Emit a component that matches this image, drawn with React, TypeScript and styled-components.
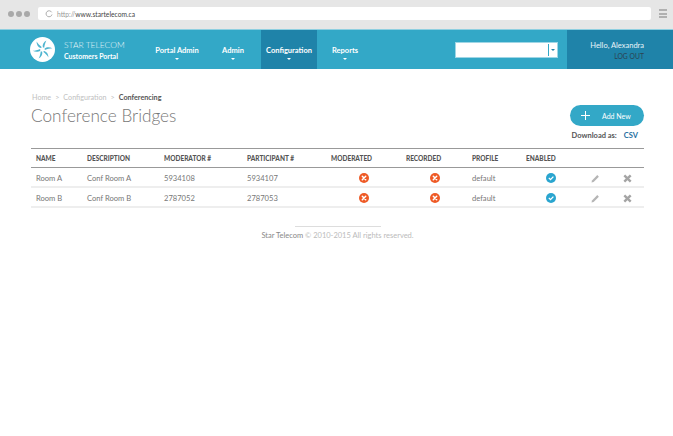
import React from "react";
import styled, { createGlobalStyle } from "styled-components";

const Global = createGlobalStyle`
  html, body { margin: 0; padding: 0; background: #fff; }
  body { width: 673px; height: 436px; overflow: hidden; font-family: Lato, "Open Sans", sans-serif; color: #555; }
  * { box-sizing: border-box; }
`;

const BrowserBar = styled.div`
  height: 29px; background: #e6e6e6; display: flex; align-items: center; padding: 0 6px 2px 8px;
`;
const Dots = styled.div`display: flex; gap: 2px; width: 30px;`;
const Dot = styled.span`width: 6px; height: 6px; border-radius: 50%; background: #a9a9a9;`;
const UrlBar = styled.div`
  width: 613px; height: 13px; background: #fff; border-radius: 2px; display: flex; align-items: center;
  padding-left: 7px; font-size: 6.7px; color: #999; gap: 4px;
`;
const UrlHost = styled.span`color: #444;`;
const Burger = styled.div`
  margin-left: 8px; width: 8px; height: 9px; display: flex; flex-direction: column; justify-content: space-between;
  & > i { display: block; height: 2px; background: #b0b0b0; }
`;

const Nav = styled.header`
  height: 40px; background: #33a8c7; border-top: 1px solid #8fcfe0; display: flex; color: #fff;
`;
const Brand = styled.div`width: 149px; padding-left: 30px; display: flex; align-items: center; gap: 9px;`;
const BrandText = styled.div`display: flex; flex-direction: column;`;
const BrandName = styled.span`font-size: 8.5px; font-weight: 300; line-height: 12px; color: #e4f4f8; white-space: nowrap;`;
const BrandSub = styled.span`font-size: 7px; font-weight: 700; line-height: 10px; white-space: nowrap;`;
const Menu = styled.nav`display: flex; height: 100%;`;
const MenuItem = styled.div<{ $active?: boolean }>`
  width: 56px; background: ${p => (p.$active ? "#1f83a9" : "transparent")};
  display: flex; flex-direction: column; align-items: center; padding-top: 16px;
  font-size: 7.5px; font-weight: 700; line-height: 10px; white-space: nowrap;
  &::after { content: ""; margin-top: 2px; border: 2.5px solid transparent; border-top: 2.5px solid #fff; border-bottom: 0; }
`;
const Spacer = styled.div`flex: 1;`;
const Picker = styled.div`
  width: 103px; height: 16px; margin: 12px 9px 0 0; background: #fff; border: 1px solid #9fd6e5; display: flex; justify-content: flex-end; align-items: center; padding-right: 1px;
`;
const PickerBtn = styled.div`
  width: 8px; height: 12px; border-left: 1px solid #33a8c7; display: flex; align-items: center; justify-content: center;
  &::after { content: ""; border: 2.5px solid transparent; border-top: 2.5px solid #1f83a9; border-bottom: 0; }
`;
const User = styled.div`
  width: 106px; background: #1f83a9; display: flex; flex-direction: column; align-items: flex-end; padding: 10px 29px 0 0;
`;
const Hello = styled.span`font-size: 7.5px; line-height: 11px; color: #e8f5f9; white-space: nowrap;`;
const LogOut = styled.span`font-size: 6.8px; line-height: 10px; color: #2b4452; white-space: nowrap;`;

const Main = styled.main`padding: 24px 29px 0 31px;`;
const Crumbs = styled.div`font-size: 7.2px; line-height: 10px; color: #c0c0c0; display: flex; gap: 4px; padding-left: 1px;`;
const Current = styled.span`color: #555; font-weight: 700;`;
const TitleRow = styled.div`display: flex; justify-content: space-between; align-items: flex-start; height: 45px;`;
const Title = styled.h1`margin: 1px 0 0; font-size: 17.2px; line-height: 24px; font-weight: 300; color: #777;`;
const Actions = styled.div`display: flex; flex-direction: column; align-items: flex-end; margin-top: 2px;`;
const AddButton = styled.button`
  width: 74px; height: 21px; border: 0; border-radius: 11px; background: #33a8c7; color: #fff; padding: 0 0 0 11px;
  font: 400 7px Lato, sans-serif; display: flex; align-items: center; gap: 12px;
`;
const Download = styled.div`margin-top: 5px; display: flex; gap: 7px; padding-right: 6px; font-size: 7.5px; font-weight: 700; line-height: 10px; color: #555;`;
const Csv = styled.span`color: #1f6f9f;`;

const Table = styled.table`
  width: 613px; border-collapse: separate; border-spacing: 0; table-layout: fixed; border-top: 1px solid #999;
`;
const Th = styled.th`
  height: 19px; padding: 1px 0 0 5px; text-align: left; font-size: 6.5px; font-weight: 900; color: #555;
  border-bottom: 1px solid #999; white-space: nowrap;
`;
const Td = styled.td`
  height: 20px; padding: 2px 0 0 5px; font-size: 7.6px; color: #777; border-bottom: 2px solid #eee; white-space: nowrap;
`;
const IconTd = styled(Td)<{ $pad: number }>`
  padding: 2px 0 0 ${p => p.$pad}px; & > svg { display: block; }
`;

const Footer = styled.footer`
  margin: 18px 0 0 0; display: flex; flex-direction: column; align-items: center; font-size: 7.5px; line-height: 10px; color: #bbb;
`;
const FooterRule = styled.div`width: 86px; height: 1px; background: #ddd; margin-bottom: 4px;`;
const FooterName = styled.span`color: #888;`;

const Logo = () => (
  <svg width="25" height="25" viewBox="0 0 25 25">
    <circle cx="12.5" cy="12.5" r="12.5" fill="#fff" />
    {[0, 60, 120, 180, 240, 300].map(a => (
      <path key={a} d="M12.8 10.2 C12.2 7.6 13.6 5 16.4 3.4 C15.2 5.6 14.6 8 14.2 10.8 Z" fill="#4fb5d0" transform={`rotate(${a} 12.5 12.5)`} />
    ))}
  </svg>
);
const Reload = () => (
  <svg width="8" height="8" viewBox="0 0 8 8" fill="none" stroke="#999" strokeWidth=".8"><path d="M6.7 2.3A3 3 0 1 0 7 4.5" /></svg>
);
const Plus = () => (
  <svg width="9" height="9" viewBox="0 0 9 9" stroke="#fff" strokeWidth="1"><path d="M4.5 0v9M0 4.5h9" /></svg>
);
const Cross = () => (
  <svg width="10" height="10" viewBox="0 0 10 10"><circle cx="5" cy="5" r="5" fill="#ee5a26" /><path d="M3.3 3.3l3.4 3.4M6.7 3.3l-3.4 3.4" stroke="#fff" strokeWidth="1.5" strokeLinecap="round" /></svg>
);
const Check = () => (
  <svg width="10" height="10" viewBox="0 0 10 10"><circle cx="5" cy="5" r="5" fill="#2aa5cf" /><path d="M2.8 4.9l1.7 1.7 2.9-3" stroke="#fff" strokeWidth="1.3" fill="none" /></svg>
);
const Pencil = () => (
  <svg width="9" height="9" viewBox="0 0 9 9"><path d="M0.5 8.5 L1 6.4 L6.3 1.1 L7.9 2.7 L2.6 8 Z" fill="#b5b5b5" /></svg>
);
const Remove = () => (
  <svg width="9" height="9" viewBox="0 0 9 9"><path d="M1.3 1.3l6.4 6.4M7.7 1.3L1.3 7.7" stroke="#a5a5a5" strokeWidth="2.4" /></svg>
);

const widths = [51, 77, 83, 84, 75, 66, 54, 54, 32, 37];
const rows = [
  ["Room A", "Conf Room A", "5934108", "5934107"],
  ["Room B", "Conf Room B", "2787052", "2787053"],
];
const heads = ["NAME", "DESCRIPTION", "MODERATOR #", "PARTICIPANT #", "MODERATED", "RECORDED", "PROFILE", "ENABLED", "", ""];

export default function App() {
  return (
    <>
      <Global />
      <BrowserBar>
        <Dots><Dot /><Dot /><Dot /></Dots>
        <UrlBar><Reload /><span>http://<UrlHost>www.startelecom.ca</UrlHost></span></UrlBar>
        <Burger><i /><i /><i /></Burger>
      </BrowserBar>
      <Nav>
        <Brand>
          <Logo />
          <BrandText><BrandName>STAR TELECOM</BrandName><BrandSub>Customers Portal</BrandSub></BrandText>
        </Brand>
        <Menu>
          <MenuItem>Portal Admin</MenuItem>
          <MenuItem>Admin</MenuItem>
          <MenuItem $active>Configuration</MenuItem>
          <MenuItem>Reports</MenuItem>
        </Menu>
        <Spacer />
        <Picker><PickerBtn /></Picker>
        <User><Hello>Hello, Alexandra</Hello><LogOut>LOG OUT</LogOut></User>
      </Nav>
      <Main>
        <Crumbs><span>Home</span><span>&gt;</span><span>Configuration</span><span>&gt;</span><Current>Conferencing</Current></Crumbs>
        <TitleRow>
          <Title>Conference Bridges</Title>
          <Actions>
            <AddButton><Plus /><span>Add New</span></AddButton>
            <Download><span>Download as:</span><Csv>CSV</Csv></Download>
          </Actions>
        </TitleRow>
        <Table>
          <colgroup>{widths.map((w, i) => <col key={i} style={{ width: w }} />)}</colgroup>
          <thead><tr>{heads.map((h, i) => <Th key={i}>{h}</Th>)}</tr></thead>
          <tbody>
            {rows.map(r => (
              <tr key={r[0]}>
                {r.map(c => <Td key={c}>{c}</Td>)}
                <IconTd $pad={33}><Cross /></IconTd>
                <IconTd $pad={29}><Cross /></IconTd>
                <Td>default</Td>
                <IconTd $pad={25}><Check /></IconTd>
                <IconTd $pad={16}><Pencil /></IconTd>
                <IconTd $pad={16}><Remove /></IconTd>
              </tr>
            ))}
          </tbody>
        </Table>
        <Footer>
          <FooterRule />
          <span><FooterName>Star Telecom</FooterName> © 2010-2015 All rights reserved.</span>
        </Footer>
      </Main>
    </>
  );
}
